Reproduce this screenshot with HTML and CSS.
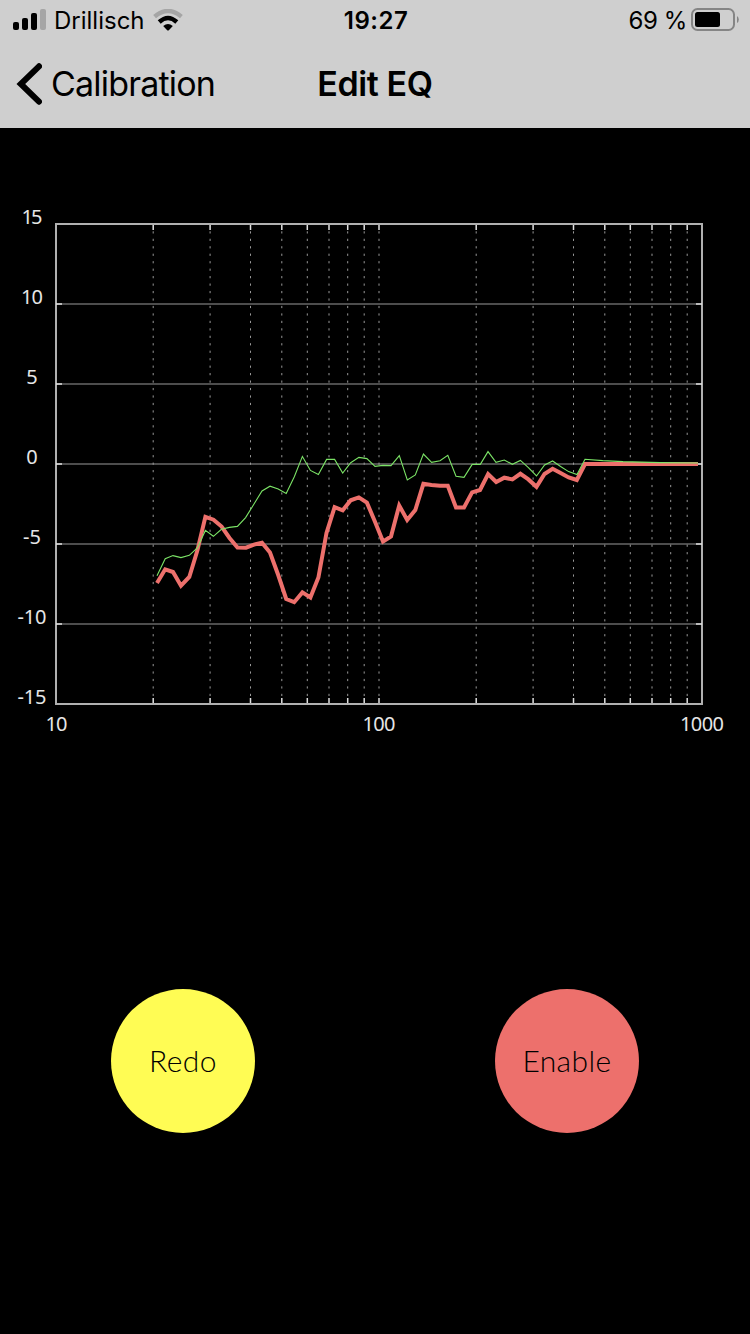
FILE: index.html
```html
<!DOCTYPE html>
<html lang="en">
  <head>
    <meta charset="UTF-8" />
    <meta name="viewport" content="width=device-width, initial-scale=1.0" />
    <title>Edit EQ</title>
    <link rel="stylesheet" href="styles.css">
  </head>
  <body>
    <header class="top">
      <div class="status-bar">
        <div class="status-left">
          <svg class="signal" width="33" height="22" viewBox="0 0 33 22">
            <rect x="0" y="13" width="6" height="8" rx="2" />
            <rect x="9" y="9" width="6" height="12" rx="2" />
            <rect x="18" y="4" width="6" height="17" rx="2" />
            <rect class="dim" x="27" y="0" width="6" height="21" rx="2" />
          </svg>
          <span class="carrier">Drillisch</span>
          <svg class="wifi" width="30" height="22" viewBox="0 0 30 22">
            <path class="arc dim-arc" d="M1.6 7.6Q15-3.6 28.4 7.6" />
            <path class="arc" d="M6.2 13Q15 5 23.8 13" />
            <path d="M10.2 17Q15 12.8 19.8 17L15.8 21.2Q15 22 14.2 21.2Z" />
          </svg>
        </div>
        <span class="clock">19:27</span>
        <div class="status-right">
          <span class="percent">69 %</span>
          <svg class="battery" width="48" height="24" viewBox="0 0 48 24">
            <rect class="case" x="1" y="1" width="42" height="21" rx="5.5" />
            <rect x="4" y="4" width="25" height="15" rx="2.5" />
            <path class="cap" d="M46 8Q47.8 9 47.8 11.5T46 15Z" />
          </svg>
        </div>
      </div>
      <nav class="nav-bar">
        <button class="back-btn">
          <svg class="chevron" width="26" height="44" viewBox="0 0 26 44">
            <path d="M23 4.3L4.8 22L23 39.7" />
          </svg>
          <span>Calibration</span>
        </button>
        <h1 class="title">Edit EQ</h1>
      </nav>
    </header>

    <main>
      <svg class="chart" width="750" height="560" viewBox="0 200 750 560">
        <path class="grid" d="M56 304H702M56 384H702M56 464H702M56 544H702M56 624H702" />
        <g id="decades"></g>
        <rect class="frame" x="56" y="224" width="646" height="480" />
        <path class="ticks" d="M56 304h6M56 384h6M56 464h6M56 544h6M56 624h6M696 304h6M696 384h6M696 464h6M696 544h6M696 624h6" />

        <polyline class="measured" points="157,583 165.2,569.3 173,572 181,585.7 189.3,577 197.5,550 205.4,516.9 213.5,519.7 221.6,526.5 229.5,538 237.5,547.6 246,547.7 254,544.6 262,542.8 270,552.5 278.2,575 286.2,599 294.2,602.2 302.4,592.4 310.4,597.5 318.4,577.5 326.5,533 334.6,507.2 342.7,510.3 350.7,500.3 358.8,497.4 366.9,502.6 375,521.7 383,541.6 391,536.4 399.2,505.5 407.2,520 415.3,510 423.4,483.8 431.5,485 440,485.8 447.8,485.8 456,507.4 464,507.4 472.1,492.4 480,490 488.1,474 496.2,482 504.3,477.7 512.4,479.4 520.4,473.8 528.4,479.4 536.5,486.8 544.5,474 552.6,468.8 560.6,473 568.7,477.4 576.8,480 585,464 698,464" />
        <polyline class="corrected" points="157,575.7 165.2,558.7 173,555.6 181,557.6 189.3,555.3 197.3,548 205.4,530.4 213.4,536.3 221.4,529.3 229.4,527.4 237.4,526.4 245.6,517.6 254,504 262,491 270,486.2 278.2,489 286.2,493.4 294.3,476.7 302.4,456.4 310.4,470.4 318.4,474.4 326.6,459.4 334.6,459.4 342.7,473 350.7,462.7 358.9,457.4 366.9,458.6 375,466.4 383,465.4 391,465.6 399.3,455.7 407.3,480 415.3,475 423.4,454 431.6,462.4 440,460.7 447.8,455.4 456,476.3 464,477.3 472.2,464.4 480.3,464.4 488,451.6 496,462.4 504.3,460 512.3,464.3 520.4,460.4 528.4,467.6 536.5,476 544.6,465 552.6,461 560.6,466.5 568.6,471.6 577,474.6 585,459.3 602.7,460.6 623,461.6 660,462.6 698,463" />

        <g class="labels">
          <text x="32" y="224" textLength="21">15</text>
          <text x="32" y="304" textLength="22">10</text>
          <text x="32" y="384">5</text>
          <text x="32" y="464">0</text>
          <text x="32" y="544" textLength="18">-5</text>
          <text x="32" y="624" textLength="29">-10</text>
          <text x="32" y="704" textLength="29">-15</text>
          <text x="56.5" y="731" textLength="22">10</text>
          <text x="379" y="731" textLength="33">100</text>
          <text x="702" y="731" textLength="44">1000</text>
        </g>
      </svg>

      <div class="actions">
        <button class="round redo">Redo</button>
        <button class="round enable">Enable</button>
      </div>
    </main>

    <script>
      // Logarithmic frequency lines between 10 and 1000 Hz
      const group = document.getElementById("decades");
      const left = 56;
      const decadeWidth = 323;

      function addPath(className, d) {
        const path = document.createElementNS("http://www.w3.org/2000/svg", "path");
        path.setAttribute("class", className);
        path.setAttribute("d", d);
        group.appendChild(path);
      }

      [10, 100].forEach((base) => {
        for (let n = 2; n <= 10; n++) {
          const hz = base * n;
          if (hz === 1000) break;
          const x = (left + decadeWidth * Math.log10(hz / 10)).toFixed(1);
          addPath("dotted", `M${x} 231.3V698`);
          addPath("ticks", `M${x} 224v6M${x} 698v6`);
        }
      });
    </script>
  </body>
</html>
```

FILE: styles.css
```css
body {
  margin: 0;
  width: 750px;
  height: 1334px;
  background-color: #000;
  font-family: Inter, "Liberation Sans", sans-serif;
  overflow: hidden;
}

button {
  border: none;
  padding: 0;
  background-color: transparent;
  color: #000;
  font-family: inherit;
}

.top {
  height: 128px;
  background-color: #cfcfcf;
}

.status-bar {
  display: grid;
  grid-template-columns: 1fr auto 1fr;
  height: 40px;
  padding: 0 11px 0 13px;
  font-size: 24px;
  line-height: 41px;
}

.status-left,
.status-right {
  display: flex;
}

.status-right {
  justify-content: flex-end;
}

.signal {
  margin-top: 9px;
}

.signal .dim {
  fill: #a5a5a5;
}

.carrier {
  margin-left: 8px;
  width: 91px;
}

.wifi {
  margin: 9px 0 0 8px;
}

.arc {
  fill: none;
  stroke: #000;
  stroke-width: 4.4;
}

.dim-arc {
  stroke: #a5a5a5;
}

.clock {
  font-weight: 600;
  letter-spacing: 0.5px;
}

.percent {
  margin-right: 4px;
  white-space: nowrap;
  letter-spacing: -0.4px;
}

.battery {
  margin-top: 8px;
}

.case {
  fill: none;
  stroke: #858585;
  stroke-width: 2;
}

.cap {
  fill: #858585;
}

.nav-bar {
  display: grid;
  grid-template-columns: 1fr auto 1fr;
  align-items: center;
  height: 88px;
  padding: 0 16px;
}

.back-btn {
  display: flex;
  align-items: center;
  font-size: 34px;
  letter-spacing: -0.8px;
}

.back-btn span {
  margin: -2px 0 0 9px;
}

.chevron path {
  fill: none;
  stroke: #000;
  stroke-width: 6;
  stroke-linecap: round;
}

.title {
  margin: -2px 0 0;
  font-size: 34px;
  font-weight: 600;
  letter-spacing: -0.4px;
}

.chart {
  display: block;
  margin-top: 72px;
}

.grid {
  stroke: #4d4d4d;
  stroke-width: 2;
}

.frame {
  fill: none;
  stroke: #b0b0b0;
  stroke-width: 2;
}

.ticks {
  stroke: #e0e0e0;
  stroke-width: 1.5;
}

.dotted {
  stroke: #999;
  stroke-width: 1;
  stroke-dasharray: 2.2 5.26;
}

.measured {
  fill: none;
  stroke: #ed706c;
  stroke-width: 4;
}

.corrected {
  fill: none;
  stroke: #7be366;
  stroke-width: 1.1;
}

.labels {
  fill: #e6e6e6;
  font-family: "Noto Sans", sans-serif;
  font-size: 20px;
  font-weight: 400;
  text-anchor: middle;
}

.actions {
  display: flex;
  justify-content: space-between;
  margin-top: 229px;
  padding: 0 111px;
}

.round {
  width: 144px;
  height: 144px;
  border-radius: 50%;
  padding-bottom: 2px;
  font-family: Lato, sans-serif;
  font-size: 30px;
  font-weight: 300;
  letter-spacing: 0.4px;
}

.redo {
  background-color: #fffc54;
}

.enable {
  background-color: #ed706c;
}
```
